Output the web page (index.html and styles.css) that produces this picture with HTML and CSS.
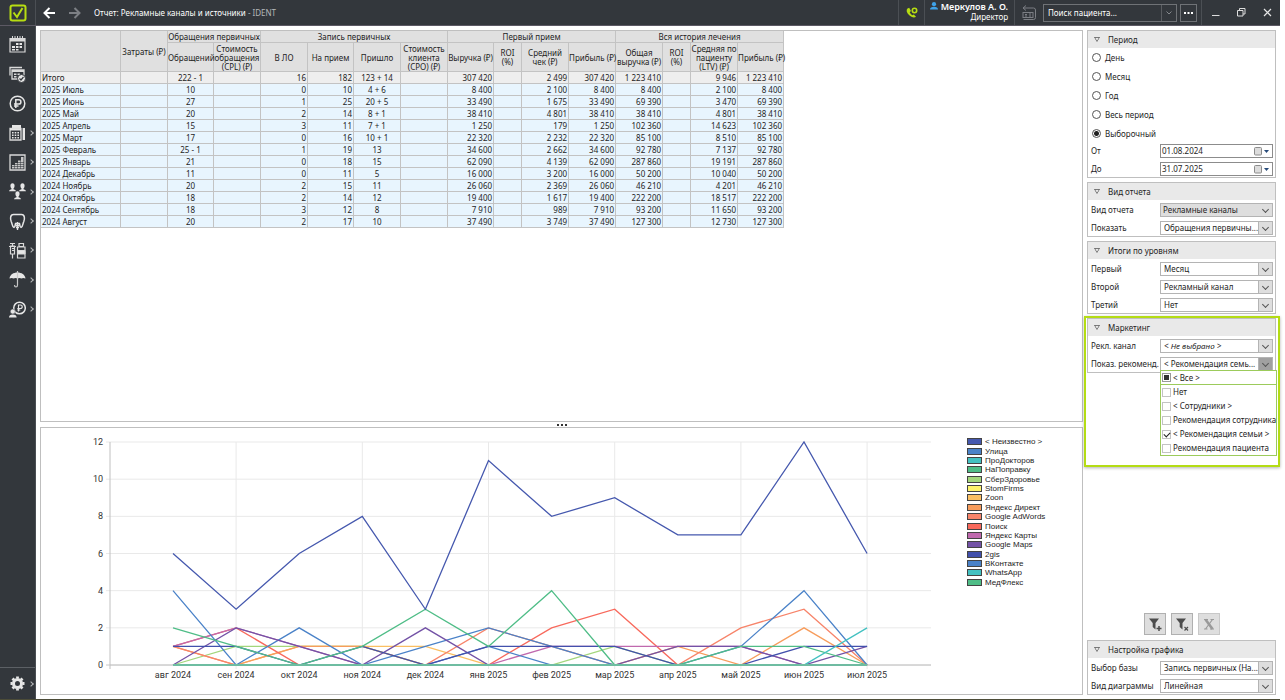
FILE: index.html
```html
<!DOCTYPE html>
<html lang="ru">
<head>
    <meta charset="UTF-8">
    <meta name="viewport" content="width=device-width, initial-scale=1.0">
    <title>Отчет: Рекламные каналы и источники - IDENT</title>
    <link rel="stylesheet" href="styles.css">
</head>
<body>
    <!-- Top bar -->
    <header class="topbar">
        <div class="logo">
            <svg width="18" height="18" viewBox="0 0 18 18"><rect x="1.5" y="1.5" width="15" height="15" rx="2" fill="none" stroke="#b7dd12" stroke-width="2"/><path d="M4.5 8.5l3.5 4.5 5.500-9" fill="none" stroke="#b7dd12" stroke-width="2"/></svg>
        </div>
        <button class="nav" aria-label="Назад"><svg width="12" height="12" viewBox="0 0 12 12"><path d="M12 6H1.500M6.500 1L1.500 6l5 5" fill="none" stroke="#fff" stroke-width="2"/></svg></button>
        <button class="nav" aria-label="Вперед"><svg width="12" height="12" viewBox="0 0 12 12"><path d="M0 6h10.500M5.500 1l5 5-5 5" fill="none" stroke="#7c7f84" stroke-width="2"/></svg></button>
        <div class="title">Отчет: Рекламные каналы и источники <span>- IDENT</span></div>
        <button class="phone" aria-label="Звонки"><svg width="12" height="12" viewBox="0 0 12 12"><path d="M1.500 1.500c-1.500 1.500-1 4 1.500 6.500s5.500 3 7 1.700L7.800 7.500l-1.500.8C5.200 7.700 4.300 6.700 3.700 5.300L5 4 3.200.8z" fill="#b7dd12"/><circle cx="8.500" cy="3.500" r="2.200" fill="none" stroke="#b7dd12" stroke-width="1.600"/></svg></button>
        <div class="user">
            <div class="user-name"><svg width="8" height="8" viewBox="0 0 8 8"><circle cx="4" cy="2.200" r="2.100" fill="#3fa2e8"/><path d="M0 7.500c0-2 1.500-2.800 4-2.800s4 .8 4 2.800z" fill="#3fa2e8"/></svg>Меркулов А. О.</div>
            <div>Директор</div>
        </div>
        <button class="card-btn" aria-label="Карта пациента"><svg width="15" height="15" viewBox="0 0 15 15" fill="none" stroke="#7c7f84"><path d="M4 .5L1 3l3 2.500M1 3h10.500q2 0 2 2v7.500q0 2-2 2h-10"/><rect x="1" y="7.500" width="10" height="5"/><path d="M3 9.500h2M3 11h2M7 9h2M7 11h2"/></svg></button>
        <div class="search">
            <input type="text" value="Поиск пациента..." aria-label="Поиск пациента">
            <button aria-label="Открыть список"><svg width="6" height="4" viewBox="0 0 6 4"><path d="M.5.5L3 3 5.500.5" fill="none" stroke="#85888c"/></svg></button>
        </div>
        <button class="more" aria-label="Еще"><svg width="9" height="2" viewBox="0 0 9 2"><path d="M0 0h2v2H0zM3.500 0h2v2h-2zM7 0h2v2H7z" fill="#fff"/></svg></button>
        <div class="window-btns">
            <button aria-label="Свернуть"><svg width="9" height="9" viewBox="0 0 9 9"><path d="M1 7.500h7.500" stroke="#ddd" fill="none"/></svg></button>
            <button aria-label="Восстановить"><svg width="9" height="9" viewBox="0 0 9 9"><path d="M.5 2.500h5.500v5.500H.5zM2.500 2.500V.5h5.500v5.500H6" stroke="#ddd" fill="none"/></svg></button>
            <button aria-label="Закрыть"><svg width="9" height="9" viewBox="0 0 9 9"><path d="M1 1l7 7M8 1L1 8" stroke="#e6e6e6" stroke-width="1.200" fill="none"/></svg></button>
        </div>
    </header>

    <div class="app">
        <!-- Left menu -->
        <nav class="sidebar">
            <div class="menu">
                <button aria-label="Расписание"><svg width="17" height="17" viewBox="0 0 17 17"><path d="M1 2.500h15v13.500H1z" fill="none" stroke="#d9d9d9" stroke-width="1.200"/><path d="M1 2.500h15v3H1z" fill="#d9d9d9"/><path d="M3.500 0v4M6 0v4M8.500 0v4M11 0v4M13.500 0v4" stroke="#d9d9d9"/><path d="M7 7h2.500v2H7zM10.500 7H13v2h-2.500zM3 10h3v2H3zM7 10h2.500v2H7zM10.500 10H13v2h-2.500zM3 13h3v1.500H3zM7 13h2.500v1.500H7z" fill="#e6e6e6"/></svg></button>
                <button aria-label="Заявки"><svg width="17" height="17" viewBox="0 0 17 17"><path d="M1 9.500V1.500h12" fill="none" stroke="#d9d9d9" stroke-width="1.300"/><path d="M3 4h12v9H3z" fill="none" stroke="#d9d9d9" stroke-width="1.300"/><path d="M3 4h12v2H3zM5 7.500h2.500V9H5zM8.500 7.500H11V9H8.500zM5 10h2.500v1.500H5z" fill="#d9d9d9"/><circle cx="12.500" cy="12.500" r="4" fill="#e6e6e6" stroke="#33373c"/><path d="M10.500 12.500l1.500 1.500 2.500-3" fill="none" stroke="#33373c" stroke-width="1.200"/></svg></button>
                <button aria-label="Касса"><svg width="17" height="17" viewBox="0 0 17 17" fill="none" stroke="#e6e6e6"><circle cx="8.500" cy="8.500" r="7.300" stroke-width="1.500"/><path d="M6.800 13V4.800h3a2 2 0 0 1 0 4.200H5M5 11h4.500" stroke-width="1.500"/></svg></button>
                <button aria-label="Финансы"><svg width="17" height="17" viewBox="0 0 17 17"><path d="M3 1h9v3H3z" fill="#e6e6e6"/><path d="M1 4.500h11v11.500H1z" fill="none" stroke="#d9d9d9" stroke-width="1.300"/><path d="M1 4.500h11v2H1zM3 8h1.600v1.500H3zM5.700 8h1.600v1.500H5.700zM8.400 8H10v1.500H8.400zM3 10.500h1.600V12H3zM5.700 10.500h1.600V12H5.700zM8.400 10.500H10V12H8.400zM3 13h1.600v1.500H3zM5.700 13h1.600v1.500H5.700zM8.400 13H10v1.500H8.400z" fill="#e6e6e6"/><path d="M14.800 4v12" stroke="#e6e6e6" stroke-width="2.400"/></svg><i></i></button>
                <button aria-label="Отчеты"><svg width="17" height="17" viewBox="0 0 17 17"><path d="M1 1h15v15H1z" fill="none" stroke="#d9d9d9" stroke-width="1.300"/><path d="M3 11h2.500v3.500H3zM6 9h2.500v5.500H6zM9 6.500h2.500v8H9zM12 3h2.500v11.500H12z" fill="#c8c8c8"/><path d="M3 12.500h12M6 10.500h9M9 8.500h6" stroke="#33373c" stroke-width=".6"/></svg><i></i></button>
                <button aria-label="Персонал"><svg width="17" height="17" viewBox="0 0 17 17" fill="#e6e6e6"><g id="man"><ellipse cx="3.500" cy="2.900" rx="2.100" ry="2.700"/><path d="M2.500 5h2v1.200q2.500.3 2.500 2H0q0-1.700 2.500-2z"/></g><use href="#man" x="10"/><use href="#man" x="5" y="8"/></svg><i></i></button>
                <button aria-label="Лечение"><svg width="17" height="17" viewBox="0 0 17 17"><path d="M5 14.500C3 14 3.500 11 2.200 8.500 1.200 6 1 1.500 4.500 1.500h8c3.500 0 3.300 4.500 2.300 7-1.300 2.500-.8 5.500-2.800 6M5 14.500c1.200 0 1-2 1.500-4M12 14.500c-1.200 0-1-2-1.500-4" fill="none" stroke="#e6e6e6" stroke-width="1.500"/><path d="M8.500 9v8M6 10.500h5M6.500 12.500h4M7 14.500h3" stroke="#e6e6e6" stroke-width="1.400"/></svg><i></i></button>
                <button aria-label="Склад"><svg width="17" height="17" viewBox="0 0 17 17" fill="none" stroke="#d9d9d9"><path d="M1 1.500h5M3.500 1.500V4M1.500 4h4v8h-4zM3.500 12v4.500M0 4.500h7M3 6.500h2M3 8.500h2" stroke-width="1.200"/><path d="M10 1.500h4.500v3H10zM8.500 5h7.500v11H8.500z" stroke-width="1.200"/><path d="M9 8.500h7V12H9z" fill="#e6e6e6"/></svg><i></i></button>
                <button aria-label="Страхование"><svg width="17" height="17" viewBox="0 0 17 17"><path d="M.5 7.500C1 3.500 4.500 1.500 8.500 1.500s7.500 2 8 6c-1.500-.8-3-.8-4 0-1-.8-3-.8-4 0-1-.8-3-.8-4 0-1-.8-2.500-.8-4 0z" fill="#e6e6e6"/><path d="M8.500 0v14q0 2-1.500 2t-1.500-2" fill="none" stroke="#c8c8c8" stroke-width="1.200"/></svg><i></i></button>
                <button aria-label="Зарплата"><svg width="17" height="17" viewBox="0 0 17 17"><circle cx="10.500" cy="7" r="5.800" fill="none" stroke="#e6e6e6" stroke-width="1.500"/><path d="M9.500 10.500V4h2a1.700 1.700 0 0 1 0 3.500H8.300M8.300 9h3" fill="none" stroke="#e6e6e6" stroke-width="1.200"/><circle cx="3.800" cy="10.500" r="2.500" fill="#e6e6e6" stroke="#33373c" stroke-width=".5"/><path d="M0 16.500q0-3 3.800-3t3.800 3z" fill="#e6e6e6"/></svg><i></i></button>
            </div>
            <div class="settings">
                <button aria-label="Настройки"><svg width="17" height="17" viewBox="0 0 17 17" fill="none" stroke="#e6e6e6"><circle cx="8.500" cy="8.500" r="4" stroke-width="3"/><path d="M8.500 1.500v2M8.500 13.500v2M1.500 8.500h2M13.500 8.500h2M3.500 3.500L5 5M12 12l1.500 1.500M3.500 13.500L5 12M12 5l1.500-1.500" stroke-width="2.800"/></svg><i></i></button>
            </div>
        </nav>

        <main class="content">
            <section class="panel report">
                <table>
                    <colgroup>
                        <col class="c-name"><col class="c-mid"><col class="c-low"><col class="c-mid"><col class="c-mid"><col class="c-low"><col class="c-mid"><col class="c-mid"><col class="c-low"><col class="c-roi"><col class="c-mid"><col class="c-mid"><col class="c-mid"><col class="c-roi"><col class="c-mid"><col class="c-low">
                    </colgroup>
                    <thead>
                        <tr class="groups">
                            <th rowspan="2"></th>
                            <th rowspan="2">Затраты (₽)</th>
                            <th colspan="2">Обращения первичных</th>
                            <th colspan="4">Запись первичных</th>
                            <th colspan="4">Первый прием</th>
                            <th colspan="4">Вся история лечения</th>
                        </tr>
                        <tr class="names">
                            <th>Обращений</th><th>Стоимость обращения (CPL) (₽)</th><th>В ЛО</th><th>На прием</th><th>Пришло</th><th>Стоимость клиента (CPO) (₽)</th><th>Выручка&nbsp;(₽)</th><th>ROI<br>(%)</th><th>Средний чек (₽)</th><th>Прибыль&nbsp;(₽)</th><th>Общая выручка&nbsp;(₽)</th><th>ROI<br>(%)</th><th>Средняя по пациенту (LTV) (₽)</th><th>Прибыль&nbsp;(₽)</th>
                        </tr>
                    </thead>
                    <tbody>
                        <tr class="total"><td>Итого</td><td></td><td>222 - 1</td><td></td><td>16</td><td>182</td><td>123 + 14</td><td></td><td>307 420</td><td></td><td>2 499</td><td>307 420</td><td>1 223 410</td><td></td><td>9 946</td><td>1 223 410</td></tr>
                        <tr><td>2025 Июль</td><td></td><td>10</td><td></td><td>0</td><td>10</td><td>4 + 6</td><td></td><td>8 400</td><td></td><td>2 100</td><td>8 400</td><td>8 400</td><td></td><td>2 100</td><td>8 400</td></tr>
                        <tr><td>2025 Июнь</td><td></td><td>27</td><td></td><td>1</td><td>25</td><td>20 + 5</td><td></td><td>33 490</td><td></td><td>1 675</td><td>33 490</td><td>69 390</td><td></td><td>3 470</td><td>69 390</td></tr>
                        <tr><td>2025 Май</td><td></td><td>20</td><td></td><td>2</td><td>14</td><td>8 + 1</td><td></td><td>38 410</td><td></td><td>4 801</td><td>38 410</td><td>38 410</td><td></td><td>4 801</td><td>38 410</td></tr>
                        <tr><td>2025 Апрель</td><td></td><td>15</td><td></td><td>3</td><td>11</td><td>7 + 1</td><td></td><td>1 250</td><td></td><td>179</td><td>1 250</td><td>102 360</td><td></td><td>14 623</td><td>102 360</td></tr>
                        <tr><td>2025 Март</td><td></td><td>17</td><td></td><td>0</td><td>16</td><td>10 + 1</td><td></td><td>22 320</td><td></td><td>2 232</td><td>22 320</td><td>85 100</td><td></td><td>8 510</td><td>85 100</td></tr>
                        <tr><td>2025 Февраль</td><td></td><td>25 - 1</td><td></td><td>1</td><td>19</td><td>13</td><td></td><td>34 600</td><td></td><td>2 662</td><td>34 600</td><td>92 780</td><td></td><td>7 137</td><td>92 780</td></tr>
                        <tr><td>2025 Январь</td><td></td><td>21</td><td></td><td>0</td><td>18</td><td>15</td><td></td><td>62 090</td><td></td><td>4 139</td><td>62 090</td><td>287 860</td><td></td><td>19 191</td><td>287 860</td></tr>
                        <tr><td>2024 Декабрь</td><td></td><td>11</td><td></td><td>0</td><td>11</td><td>5</td><td></td><td>16 000</td><td></td><td>3 200</td><td>16 000</td><td>50 200</td><td></td><td>10 040</td><td>50 200</td></tr>
                        <tr><td>2024 Ноябрь</td><td></td><td>20</td><td></td><td>2</td><td>15</td><td>11</td><td></td><td>26 060</td><td></td><td>2 369</td><td>26 060</td><td>46 210</td><td></td><td>4 201</td><td>46 210</td></tr>
                        <tr><td>2024 Октябрь</td><td></td><td>18</td><td></td><td>2</td><td>14</td><td>12</td><td></td><td>19 400</td><td></td><td>1 617</td><td>19 400</td><td>222 200</td><td></td><td>18 517</td><td>222 200</td></tr>
                        <tr><td>2024 Сентябрь</td><td></td><td>18</td><td></td><td>3</td><td>12</td><td>8</td><td></td><td>7 910</td><td></td><td>989</td><td>7 910</td><td>93 200</td><td></td><td>11 650</td><td>93 200</td></tr>
                        <tr><td>2024 Август</td><td></td><td>20</td><td></td><td>2</td><td>17</td><td>10</td><td></td><td>37 490</td><td></td><td>3 749</td><td>37 490</td><td>127 300</td><td></td><td>12 730</td><td>127 300</td></tr>
                    </tbody>
                </table>
            </section>
            <div class="splitter"><span></span><span></span><span></span></div>
            <section class="panel chart">
                <svg id="plot" viewBox="0 0 919 266"></svg>
                <ul id="legend" class="legend"></ul>
            </section>
        </main>

        <!-- Report settings -->
        <aside class="filters">
            <section class="box">
                <h2>Период</h2>
                <div class="radios">
                    <label><input type="radio" name="period">День</label>
                    <label><input type="radio" name="period">Месяц</label>
                    <label><input type="radio" name="period">Год</label>
                    <label><input type="radio" name="period">Весь период</label>
                    <label><input type="radio" name="period" checked>Выборочный</label>
                </div>
                <div class="fields dates">
                    <label for="from">От</label>
                    <div class="combo date"><input type="text" id="from" value="01.08.2024"><svg width="15" height="9" viewBox="0 0 15 9"><rect x=".5" y=".5" width="7" height="7.500" rx="1" fill="#dcdcdc" stroke="#8c8c8c"/><path d="M10 3h5l-2.500 3z" fill="#274b7a"/></svg></div>
                    <label for="to">До</label>
                    <div class="combo date"><input type="text" id="to" value="31.07.2025"><svg width="15" height="9" viewBox="0 0 15 9"><rect x=".5" y=".5" width="7" height="7.500" rx="1" fill="#dcdcdc" stroke="#8c8c8c"/><path d="M10 3h5l-2.500 3z" fill="#274b7a"/></svg></div>
                </div>
            </section>

            <section class="box">
                <h2>Вид отчета</h2>
                <div class="fields">
                    <label for="kind">Вид отчета</label>
                    <div class="combo flat"><select id="kind"><option>Рекламные каналы</option></select></div>
                    <label for="show">Показать</label>
                    <div class="combo"><select id="show"><option>Обращения первичны...</option></select></div>
                </div>
            </section>

            <section class="box">
                <h2>Итоги по уровням</h2>
                <div class="fields">
                    <label for="level1">Первый</label>
                    <div class="combo"><select id="level1"><option>Месяц</option></select></div>
                    <label for="level2">Второй</label>
                    <div class="combo"><select id="level2"><option>Рекламный канал</option></select></div>
                    <label for="level3">Третий</label>
                    <div class="combo"><select id="level3"><option>Нет</option></select></div>
                </div>
            </section>

            <section class="box marketing">
                <h2>Маркетинг</h2>
                <div class="fields">
                    <label for="channel">Рекл. канал</label>
                    <div class="combo empty"><select id="channel"><option>&lt; Не выбрано &gt;</option></select></div>
                    <label for="referral">Показ. рекоменд.</label>
                    <div class="combo open">
                        <select id="referral"><option>&lt; Рекомендация семь...</option></select>
                        <div class="dropdown">
                            <label class="all"><input type="checkbox" class="partial">&lt; Все &gt;</label>
                            <label><input type="checkbox">Нет</label>
                            <label><input type="checkbox">&lt; Сотрудники &gt;</label>
                            <label><input type="checkbox">Рекомендация сотрудника</label>
                            <label><input type="checkbox" checked>&lt; Рекомендация семьи &gt;</label>
                            <label><input type="checkbox">Рекомендация пациента</label>
                        </div>
                    </div>
                </div>
            </section>

            <div class="actions">
                <button aria-label="Добавить фильтр"><svg width="16" height="16" viewBox="0 0 16 16"><path d="M2 2.500h10L8.500 7v6.500L5.700 11V7z" fill="#4c4c4c"/><path d="M12 10v5M9.500 12.500h5" stroke="#4c4c4c" stroke-width="1.500"/></svg></button>
                <button aria-label="Сбросить фильтр"><svg width="16" height="16" viewBox="0 0 16 16"><path d="M2 2.500h10L8.500 7v6.500L5.700 11V7z" fill="#4c4c4c"/><path d="M10.500 11l3.500 3.500M14 11l-3.500 3.500" stroke="#4c4c4c" stroke-width="1.200"/></svg></button>
                <button aria-label="Экспорт в Excel" disabled><svg width="16" height="16" viewBox="0 0 16 16"><path d="M4.500 3.500l7 9.500" stroke="#999" stroke-width="2.600"/><path d="M11.500 3.500l-7 9.500M3 3.500h4M9.500 3.500H13M3 13h3.500M9 13h4" stroke="#999" stroke-width="1.200"/></svg></button>
            </div>

            <section class="box">
                <h2>Настройка графика</h2>
                <div class="fields">
                    <label for="base">Выбор базы</label>
                    <div class="combo"><select id="base"><option>Запись первичных (На...</option></select></div>
                    <label for="type">Вид диаграммы</label>
                    <div class="combo"><select id="type"><option>Линейная</option></select></div>
                </div>
            </section>
        </aside>
    </div>

    <script src="chart.js"></script>
</body>
</html>
```
FILE: styles.css
```css
* {
    box-sizing: border-box;
}
body {
    margin: 0;
    padding-right: 5px;
    height: 100vh;
    display: flex;
    flex-direction: column;
    background: #fff;
    color: #1e1e1e;
    font-family: "Noto Sans", "Open Sans", sans-serif;
    font-size: 8px;
    line-height: 10px;
    overflow: hidden;
}
button, input, select {
    margin: 0;
    padding: 0;
    border: none;
    background: none;
    color: inherit;
    font: inherit;
}
button {
    display: flex;
    align-items: center;
    justify-content: center;
}
svg {
    display: block;
    flex: none;
}

/* Top bar */
.topbar {
    display: flex;
    height: 26px;
    flex: none;
    background: #33373c;
    border-bottom: 1px solid #5c5964;
    color: #fff;
}
.logo {
    width: 36px;
    display: flex;
    align-items: center;
    justify-content: center;
    border-right: 1px solid #4b4f54;
}
.nav {
    width: 26px;
}
.title {
    flex: 1;
    align-self: center;
    padding-left: 6px;
}
.title span {
    color: #b4b6b8;
}
.phone {
    width: 27px;
    border-left: 1px solid #4b4f54;
    border-right: 1px solid #4b4f54;
}
.user {
    width: 90px;
    padding: 2px 6px 0 0;
    border-right: 1px solid #4b4f54;
    text-align: right;
}
.user-name {
    display: flex;
    justify-content: flex-end;
    gap: 3px;
    font-size: 9px;
    font-weight: 600;
}
.card-btn {
    width: 28px;
}
.search {
    display: flex;
    width: 134px;
    height: 18px;
    align-self: center;
    border: 1px solid #6f7276;
}
.search input {
    flex: 1;
    min-width: 0;
    padding-left: 4px;
}
.search button {
    width: 15px;
    border-left: 1px solid #5a5d61;
}
.more {
    width: 17px;
    height: 18px;
    margin: 0 4px 0 3px;
    align-self: center;
    border: 1px solid #6f7276;
}
.window-btns {
    display: flex;
    border-left: 1px solid #4b4f54;
}
.window-btns button {
    width: 26px;
}

/* Page */
.app {
    display: flex;
    flex: 1;
    min-height: 0;
    border-bottom: 1px solid #4c4c38;
}
.sidebar {
    width: 36px;
    display: flex;
    flex-direction: column;
    justify-content: space-between;
    background: #33373c;
    border-right: 1px solid #4b4f54;
}
.menu {
    height: 294px;
    margin-top: 4px;
    display: grid;
    grid-auto-rows: 1fr;
}
.settings {
    height: 32px;
    display: grid;
    border-top: 1px solid #5c6065;
}
.sidebar button {
    justify-content: flex-start;
    gap: 3px;
    padding-left: 9px;
}
.sidebar i {
    width: 4px;
    height: 4px;
    border: 1px solid #b4b6b8;
    border-width: 1px 1px 0 0;
    transform: rotate(45deg);
}
.content {
    flex: 1;
    min-width: 0;
    padding: 4px;
    display: flex;
    flex-direction: column;
}
.panel {
    border: 1px solid #bfbfbf;
}

/* Report table */
.report {
    flex: 1;
    min-height: 0;
}
table {
    table-layout: fixed;
    width: 743px;
    border-spacing: 0;
}
.c-name {
    width: 80px;
}
.c-mid {
    width: 47px;
}
.c-low {
    width: 46px;
}
.c-roi {
    width: 28px;
}
th, td {
    height: 12px;
    padding: 0 1px;
    border-right: 1px solid #c3c3c3;
    border-bottom: 1px solid #c3c3c3;
    text-align: right;
    white-space: nowrap;
}
th {
    padding: 0;
    background: #e0e0e0;
    font-weight: 400;
    line-height: 9px;
    text-align: center;
}
.names th {
    height: 29px;
    white-space: normal;
}
td {
    background: #e8f5fe;
    line-height: 11px;
}
.total td {
    background: #eee;
}
td:nth-child(1) {
    text-align: left;
}
td:nth-child(3), td:nth-child(7) {
    text-align: center;
}

/* Splitter */
.splitter {
    height: 5px;
    display: flex;
    align-items: center;
    justify-content: center;
    gap: 2px;
}
.splitter span {
    width: 2px;
    height: 2px;
    background: #333;
}

/* Chart */
.chart {
    display: flex;
}
#plot {
    flex: 1;
    min-width: 0;
    font-family: Roboto, sans-serif;
    font-size: 9px;
    fill: #333;
}
.legend {
    width: 122px;
    height: 150px;
    margin: 9px 0 0;
    padding: 0 0 0 7px;
    display: grid;
    list-style: none;
    font-family: "Liberation Sans", sans-serif;
    line-height: 9px;
}
.legend li {
    display: flex;
    align-items: center;
    gap: 3px;
}
.legend i {
    width: 15px;
    height: 7px;
    border: 1px solid #444;
}

/* Right column */
.filters {
    width: 193px;
    padding: 4px 4px 4px 0;
    display: flex;
    flex-direction: column;
    gap: 4px;
}
.box {
    position: relative;
    border: 1px solid #bfbfbf;
}
.box h2 {
    display: flex;
    align-items: center;
    height: 17px;
    margin: 0;
    padding-left: 6px;
    gap: 8px;
    background: #e9e9e9;
    font-size: 8px;
    font-weight: 400;
}
.box h2::before {
    content: "";
    width: 6px;
    height: 5px;
    background: #555;
    clip-path: polygon(0 0, 100% 0, 50% 100%, 0 0, 18% 16%, 50% 76%, 82% 16%, 18% 16%);
}
.radios label {
    display: flex;
    align-items: center;
    gap: 4px;
    height: 19px;
    padding-left: 4px;
}
.radios input {
    appearance: none;
    width: 9px;
    height: 9px;
    border: 1px solid #555;
    border-radius: 50%;
}
.radios input:checked {
    background: radial-gradient(#222 2px, transparent 3px);
}
.fields {
    display: grid;
    grid-template-columns: 69px minmax(0, 1fr);
    gap: 4px 0;
    padding: 3px 2px 1px 3px;
    align-items: center;
    white-space: nowrap;
}
.dates {
    padding-top: 1px;
}
.combo {
    position: relative;
    display: flex;
    height: 14px;
    border: 1px solid #b4b4b4;
    background: #fff;
}
.combo select, .combo input[type=text] {
    appearance: none;
    flex: 1;
    width: 0;
    min-width: 0;
    padding-left: 3px;
    line-height: 12px;
}
.combo:not(.date)::before {
    content: "";
    position: absolute;
    top: 3px;
    right: 4px;
    width: 4px;
    height: 4px;
    border: 1px solid #555;
    border-width: 0 1px 1px 0;
    transform: rotate(45deg);
}
.combo:not(.date)::after {
    content: "";
    flex: none;
    width: 13px;
    border-left: 1px solid #b4b4b4;
    background: #dedede;
    order: 1;
}
.combo::before {
    z-index: 1;
}
.combo.date {
    align-items: center;
    padding-right: 3px;
    border-color: #8c8c8c;
}
.combo.date input[type=text] {
    padding-left: 1px;
}
.combo.flat, .combo.flat::after {
    background: #dedede;
}
.combo.flat::after {
    border: none;
}
.combo.flat select {
    padding-left: 2px;
}
.combo.empty select {
    font-style: italic;
}
.combo.open::after {
    background: #a0a0a0;
}

/* Highlighted block with opened list */
.marketing::after {
    content: "";
    position: absolute;
    inset: -3px -5px -95px -4px;
    border: 2px solid #b4dc14;
    box-shadow: 0 1px 3px rgba(0, 0, 0, 0.3);
    pointer-events: none;
}
.dropdown {
    position: absolute;
    z-index: 2;
    top: 12px;
    left: -1px;
    width: 117px;
    border: 1px solid #9ccb5b;
    background: #fff;
}
.dropdown label {
    display: flex;
    align-items: center;
    gap: 2px;
    height: 14px;
    padding-left: 1px;
}
.dropdown .all {
    border-bottom: 1px solid #9ccb5b;
}
.dropdown input {
    appearance: none;
    flex: none;
    width: 9px;
    height: 9px;
    border: 1px solid #c3c3c3;
    background: #fff;
}
.dropdown .partial {
    border-color: #999;
    background: #333 content-box;
    padding: 1px;
}
.dropdown input:checked::before {
    content: "";
    display: block;
    width: 5px;
    height: 3px;
    margin: 1px;
    border: 1px solid #222;
    border-width: 0 0 1px 1px;
    transform: rotate(-45deg);
}

/* Filter buttons */
.actions {
    display: flex;
    justify-content: center;
    gap: 5px;
    margin-top: auto;
    margin-bottom: 1px;
}
.actions button {
    width: 22px;
    height: 22px;
    border: 1px solid #b0b0b0;
    background: #dedede;
}
.actions button:disabled {
    border-color: #c8c8c8;
}
```
FILE: chart.js
```js
const months = ['авг 2024', 'сен 2024', 'окт 2024', 'ноя 2024', 'дек 2024', 'янв 2025', 'фев 2025', 'мар 2025', 'апр 2025', 'май 2025', 'июн 2025', 'июл 2025'];

const series = [
    { name: '< Неизвестно >', color: '#4558ae', data: [6, 3, 6, 8, 3, 11, 8, 9, 7, 7, 12, 6] },
    { name: 'Улица', color: '#4a82c8', data: [4, 0, 2, 0, 1, 2, 1, 0, 0, 1, 4, 0] },
    { name: 'ПроДокторов', color: '#43c1c1', data: [0, 0, 0, 0, 0, 0, 0, 0, 0, 0, 0, 0] },
    { name: 'НаПоправку', color: '#4fbd87', data: [2, 1, 0, 1, 3, 1, 4, 0, 0, 1, 1, 0] },
    { name: 'СберЗдоровье', color: '#a3d67c', data: [0, 1, 1, 1, 0, 0, 0, 1, 0, 0, 0, 0] },
    { name: 'StomFirms', color: '#fdf36c', data: [0, 0, 0, 0, 0, 0, 0, 0, 0, 0, 0, 0] },
    { name: 'Zoon', color: '#fbbf62', data: [0, 0, 1, 1, 1, 0, 0, 0, 0, 0, 0, 0] },
    { name: 'Яндекс Директ', color: '#f79c5c', data: [1, 0, 1, 1, 0, 0, 0, 0, 1, 0, 2, 0] },
    { name: 'Google AdWords', color: '#f7846a', data: [1, 0, 0, 0, 0, 2, 1, 0, 0, 2, 3, 0] },
    { name: 'Поиск', color: '#f8695c', data: [1, 2, 0, 0, 0, 0, 2, 3, 0, 0, 0, 0] },
    { name: 'Яндекс Карты', color: '#c069ae', data: [1, 2, 1, 0, 0, 0, 1, 1, 1, 1, 0, 0] },
    { name: 'Google Maps', color: '#7352a6', data: [0, 2, 1, 0, 2, 0, 0, 0, 1, 1, 0, 1] },
    { name: '2gis', color: '#4250ac', data: [1, 1, 0, 1, 0, 1, 1, 1, 0, 0, 1, 1] },
    { name: 'ВКонтакте', color: '#4a82c8', data: [0, 0, 0, 0, 0, 1, 0, 0, 0, 0, 0, 0] },
    { name: 'WhatsApp', color: '#43c1c1', data: [0, 0, 0, 0, 0, 0, 0, 0, 0, 0, 0, 2] },
    { name: 'МедФлекс', color: '#4fbd87', data: [0, 0, 0, 0, 0, 0, 0, 0, 0, 0, 0, 0] }
];

// Series in the order they are painted, the last one is on top
const order = [5, 4, 6, 7, 8, 9, 10, 13, 1, 11, 12, 3, 2, 14, 15, 0];

const left = 69;
const right = 890;
const bottom = 237;
const top0 = 14;

function x(i) {
    return 132 + i * 63.1;
}

function y(value) {
    return bottom - value * (bottom - top0) / 12;
}

function line(x1, y1, x2, y2, color) {
    return `<path d="M${x1} ${y1}L${x2} ${y2}" stroke="${color}"/>`;
}

let html = '';
for (let v = 0; v <= 12; v += 2) {
    html += line(left - 4, y(v), right, y(v), v ? '#e9e9e9' : '#c8c8c8');
    html += `<text x="${left - 7}" y="${y(v) + 3}" text-anchor="end">${v}</text>`;
}
for (let i = 0; i < months.length; i++) {
    if (i % 2) {
        html += line(x(i), top0, x(i), bottom + 4, '#e9e9e9');
    }
    html += `<text x="${x(i)}" y="${bottom + 13}" text-anchor="middle">${months[i]}</text>`;
}
html += line(left, top0, left, bottom + 4, '#c0c0c0');
for (const n of order) {
    const points = series[n].data.map((v, i) => x(i) + ',' + y(v)).join(' ');
    html += `<polyline points="${points}" fill="none" stroke="${series[n].color}" stroke-width="1.3"/>`;
}
// Zero axis goes over the flat parts of the series
html += line(left, bottom, right, bottom, 'rgba(190, 190, 190, 0.6)');
document.getElementById('plot').innerHTML = html;

for (const s of series) {
    const li = document.createElement('li');
    const mark = document.createElement('i');
    mark.style.background = s.color;
    li.append(mark, s.name);
    document.getElementById('legend').append(li);
}
```
